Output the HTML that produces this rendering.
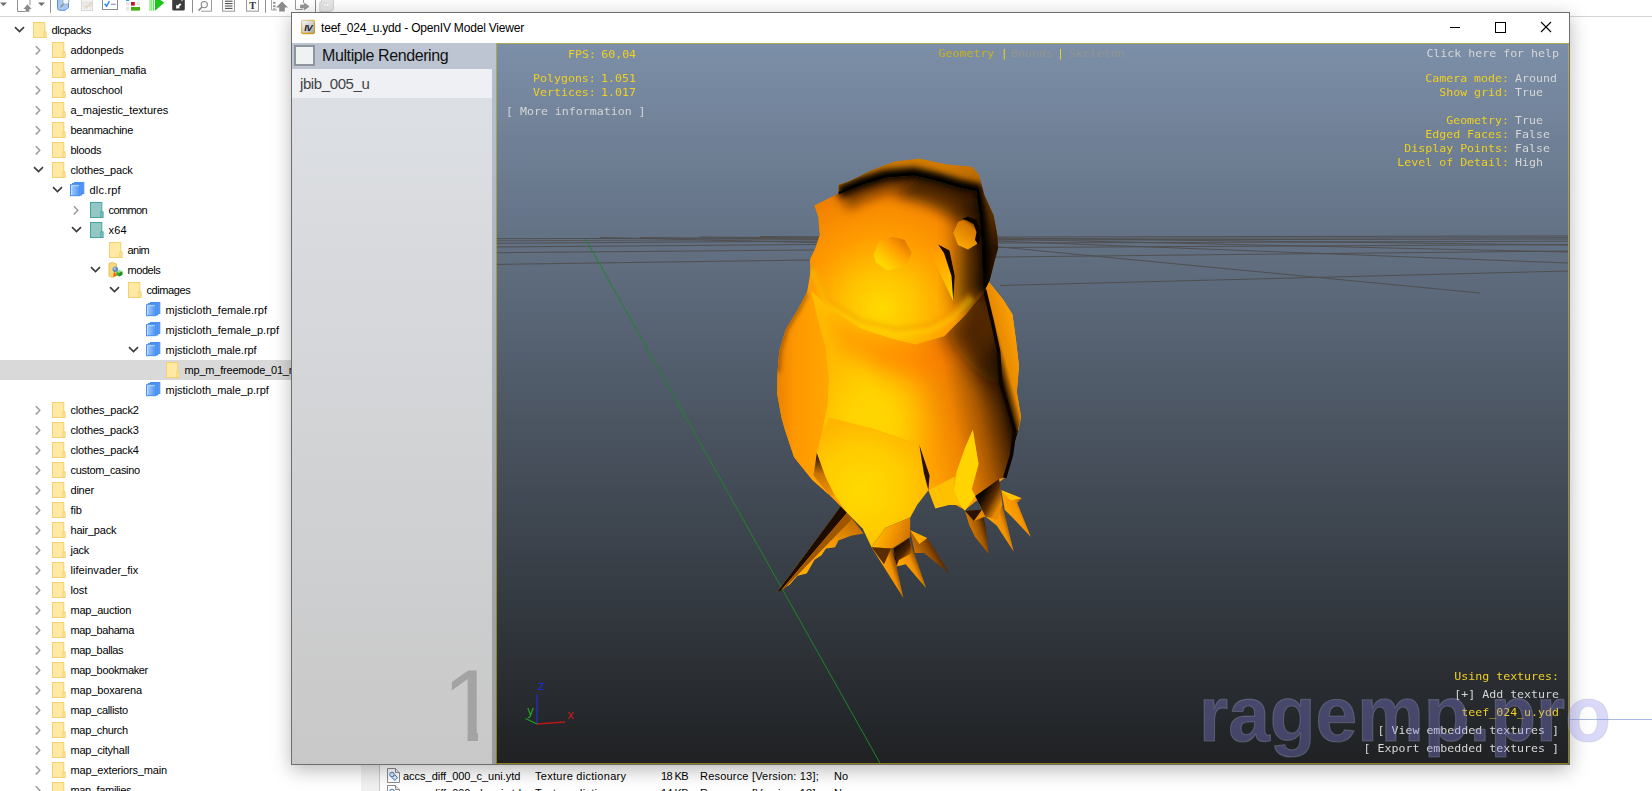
<!DOCTYPE html>
<html><head><meta charset="utf-8"><title>OpenIV</title>
<style>
html,body{margin:0;padding:0;}
body{width:1652px;height:791px;overflow:hidden;background:#fff;position:relative;font-family:"Liberation Sans",sans-serif;}
#tb{position:absolute;left:0;top:0;width:1652px;height:16px;border-bottom:1px solid #d4d4d4;background:#fff;}
#tree{position:absolute;left:0;top:0;width:361px;height:791px;overflow:hidden;}
.row{position:absolute;left:0;width:361px;height:20px;}
.row.sel{background:#d9d9d9;}
.row .ar{position:absolute;top:5px;}
.row .ic{position:absolute;top:2px;}
.row .tx{position:absolute;top:3px;font-size:11px;line-height:14px;color:#000;white-space:nowrap;letter-spacing:-0.25px;}
#split{position:absolute;left:361px;top:17px;width:18px;height:774px;background:#f0f0f0;border-right:1px solid #c8c8c8;}
#list{position:absolute;left:380px;top:764px;width:1272px;height:27px;font-size:11px;color:#000;}
#list span{position:absolute;white-space:nowrap;letter-spacing:-0.02px;}
#win{position:absolute;left:291px;top:12px;width:1277px;height:751px;border:1px solid #6e6e6e;background:#fff;box-shadow:0 5px 18px 0 rgba(0,0,0,0.28);}
#title{position:absolute;left:0;top:0;width:1277px;height:30px;background:#fff;}
#title .t{position:absolute;left:29px;top:7px;font-size:12px;line-height:16px;color:#000;white-space:nowrap;letter-spacing:-0.19px;}
#lp{position:absolute;left:0;top:30px;width:200px;height:721px;background:linear-gradient(#dee1e6,#c8c8c8);}
#lph{position:absolute;left:0;top:0;width:204px;height:26px;background:#bcc5d1;}
#cb{position:absolute;left:2px;top:2px;width:17px;height:17px;border:2px solid #8e959f;background:#f0f1f3;}
#lph .t{position:absolute;left:30px;top:3px;font-size:16px;line-height:20px;color:#111;white-space:nowrap;letter-spacing:-0.4px;}
#li{position:absolute;left:0;top:26px;width:200px;height:29px;background:#eef0f3;}
#li .t{position:absolute;left:8px;top:5px;font-size:15px;line-height:19px;color:#444;white-space:nowrap;letter-spacing:-0.4px;}
#one{position:absolute;left:150px;top:605px;font-size:102px;line-height:116px;color:#a3a3a3;clip-path:polygon(0 0,36px 0,36px 100px,25.5px 100px,25.5px 83.5px,0 83.5px);}
#strip{position:absolute;left:200px;top:56px;width:4px;height:695px;background:linear-gradient(#b6c0ce,#9a9a9a);}
#vp{position:absolute;left:204px;top:30px;width:1071px;height:719px;border:1px solid #a89a30;border-image:linear-gradient(#aea854,#8b7e16) 1;background:linear-gradient(#7c8fa8,#1f2123);overflow:hidden;}
#vp svg.scene{position:absolute;left:0;top:0;}
.m{position:absolute;font-family:"DejaVu Sans Mono","Liberation Mono",monospace;font-size:11.6px;line-height:14px;white-space:pre;color:#d6d6d6;transform:scaleY(0.88);transform-origin:0 11px;}
.y{color:#f0d020;}
.m.r{text-align:right;}
.m.lab{right:59px;}
.m.val{left:1018px;}
.ax{position:absolute;font-family:"DejaVu Sans","Liberation Sans",sans-serif;font-size:12px;line-height:14px;}
.dim{color:#93958c;}
#wm{position:absolute;left:1199px;top:665.5px;font-family:"Liberation Sans",sans-serif;font-weight:bold;font-size:78px;line-height:96px;color:rgba(140,138,240,0.32);-webkit-text-stroke:1.2px rgba(170,175,190,0.28);transform-origin:0 0;transform:scaleX(0.96);white-space:nowrap;}
#bl{position:absolute;left:1570px;top:719px;width:82px;height:1px;background:#a9bbe4;}
</style></head><body>
<svg width="0" height="0" style="position:absolute"><defs>
<linearGradient id="gRpf" x1="0" y1="0" x2="1" y2="0"><stop offset="0" stop-color="#a9d0ff"/><stop offset="1" stop-color="#4a93f4"/></linearGradient>
<g id="i-folder"><rect x="0.5" y="0.5" width="11.3" height="15" fill="#ffe9a3" stroke="#f3d071"/><rect x="10.9" y="9.9" width="2.2" height="5.6" fill="#ffe9a3" stroke="#f3d071"/><rect x="1" y="1" width="9" height="14" fill="#ffe9a3"/></g>
<g id="i-teal"><rect x="0.5" y="0.5" width="11.3" height="15" fill="#94c7c3" stroke="#43a59e"/><rect x="10.9" y="9.9" width="2.2" height="5.6" fill="#94c7c3" stroke="#43a59e"/><rect x="1" y="1" width="9" height="14" fill="#94c7c3"/></g>
<g id="i-rpf"><rect x="4.5" y="0.5" width="9.3" height="11" fill="url(#gRpf)" stroke="#4a8ff0"/><rect x="2.5" y="1.5" width="9.3" height="11.5" fill="url(#gRpf)" stroke="#4a8ff0"/><rect x="0.5" y="2.7" width="9.3" height="11" fill="url(#gRpf)" stroke="#4a8ff0"/><path d="M1.5 13 V3.7 H9" fill="none" stroke="#cfe5ff" stroke-width="0.8"/></g>
<g id="i-models"><path d="M1 1.5 L4.5 0.5 L8.5 2 V13 L4.5 15.5 L1 14Z" fill="#f7d978" stroke="#e2b94a" stroke-width="0.8"/><circle cx="7.3" cy="7.3" r="2.8" fill="#5f8fc4"/><circle cx="6.6" cy="6.5" r="1.2" fill="#a9c7e6"/><path d="M5 15 L6 9.5 L9.5 13.5Z" fill="#f06a10"/><path d="M8.5 9.8 L11.5 8.3 L14.3 9.5 V12.8 L11.3 14.6 L8.5 13Z" fill="#2fae2f"/><path d="M8.5 9.8 L11.5 8.3 L14.3 9.5 L11.3 11Z" fill="#8fe08f"/><path d="M11.3 11 L14.3 9.5 V12.8 L11.3 14.6Z" fill="#1e8a1e"/></g>
<g id="i-file"><path d="M0.5 0.5 H8.5 L12.5 4.5 V14.5 H0.5Z" fill="#fff" stroke="#8a8a8a"/><path d="M8.5 0.5 V4.5 H12.5" fill="#e8e8e8" stroke="#8a8a8a"/><circle cx="5" cy="6.5" r="2.3" fill="#dbe8f7" stroke="#3c6fb0" stroke-width="0.9"/><rect x="5.8" y="7.6" width="4" height="4" transform="rotate(45 7.8 9.6)" fill="#dbe8f7" stroke="#3c6fb0" stroke-width="0.9"/></g>
</defs></svg>
<div id="tb"><svg width="345" height="16" viewBox="0 0 345 16" style="position:absolute;left:0;top:0">
<path d="M0 2.4 H7 L3.5 6Z" fill="#6e6e6e"/>
<path d="M17.5 -1 V11.5 H25.5" fill="none" stroke="#8f8f8f"/><path d="M30 -1 V5" stroke="#8f8f8f"/>
<path d="M27.5 4.2 L31.6 9 H29.4 V11.8 H25.6 V9 H23.4Z" fill="#8a8a8a"/>
<path d="M38 2.4 H45 L41.5 6Z" fill="#6e6e6e"/>
<rect x="50" y="0" width="1" height="12.7" fill="#8e8e8e"/>
<path d="M57.5 -1 V8 Q57.5 10.3 60 10.3 H65 L68.5 7.5 V-1Z" fill="#a9c9f3" stroke="#5a8ede" stroke-width="1"/>
<circle cx="65.8" cy="1.3" r="3.2" fill="#eef5ff" stroke="#9aa6b8" stroke-width="1"/><path d="M63.5 4 L60.5 7.3" stroke="#8a8f9a" stroke-width="1.6"/>
<rect x="81.5" y="-1" width="11" height="11.5" fill="#f3f3f3" stroke="#d8d8d8"/><path d="M84 1 V9 M87 1 V9 M90 1 V9 M82 3 H92 M82 6 H92" stroke="#dcdcdc" stroke-width="0.8"/><path d="M85 8.5 L92.5 2.5" stroke="#e3d3b8" stroke-width="1.6"/>
<rect x="102.5" y="-1" width="15" height="10.5" fill="#fff" stroke="#8c8c8c"/><path d="M104.6 3.8 L106.6 6.2 L109.4 1.2" fill="none" stroke="#2a86e2" stroke-width="1.4"/><path d="M110.8 4.3 H115.8" stroke="#9a8fc0" stroke-width="1.2"/>
<rect x="126" y="-1" width="3.2" height="2" fill="#2a9be6"/><rect x="130.8" y="-1" width="4" height="1" fill="#e8e8e8"/><rect x="136.5" y="-1" width="3.5" height="1" fill="#e8e8e8"/>
<rect x="126" y="2" width="3.4" height="3.6" fill="#e6e6e6"/><rect x="131" y="2" width="3.8" height="3.6" fill="#c8102e"/><rect x="136.5" y="2" width="3.5" height="3.6" fill="#e6e6e6"/>
<rect x="126" y="7" width="3.4" height="3.6" fill="#e6e6e6"/><rect x="131" y="7" width="9" height="3.6" fill="#46ab12"/>
<path d="M150 -1 V10.8 M151.8 -1 V10.8 M153.6 -1 V10.8" stroke="#3fe03f" stroke-width="0.9"/><path d="M155 -4 L164.3 2.8 L155 10.8Z" fill="#1fc51f"/>
<rect x="172.2" y="-2" width="12.6" height="12.6" rx="1.6" fill="#3b3b3b"/><path d="M176 8.6 L176.4 4.6 L177.6 5.6 L180 3.2 L181.4 4.6 L179 7 L180 8.2Z" fill="#fff"/><path d="M179.5 -1 L182 -1 V1.2" fill="none" stroke="#cfcfcf" stroke-width="1.2"/>
<rect x="192" y="0" width="1" height="12.7" fill="#8e8e8e"/>
<path d="M211.5 -1 V11.2 H201" fill="none" stroke="#9a9a9a"/><circle cx="204.3" cy="4.6" r="3.1" fill="#f6f6f6" stroke="#8a8a8a" stroke-width="1.1"/><path d="M202 7 L198.6 10.6" stroke="#8a8a8a" stroke-width="1.6"/>
<rect x="222.5" y="-2" width="12" height="13.2" fill="#fbfbfb" stroke="#9a9a9a"/><path d="M225 1.2 H232.5 M225 3.6 H232.5 M225 6 H232.5 M225 8.4 H232.5" stroke="#444" stroke-width="1"/>
<rect x="246.5" y="-2" width="12" height="13.2" fill="#fbfbfb" stroke="#9a9a9a"/>
<text x="252.5" y="9" text-anchor="middle" font-family="Liberation Serif,serif" font-weight="bold" font-size="10" fill="#333">T</text>
<rect x="265" y="0" width="1" height="12.7" fill="#8e8e8e"/>
<path d="M271.5 -1 V10 H277" fill="none" stroke="#a8a8a8"/><rect x="273" y="1.8" width="2.6" height="2" fill="#9a9a9a"/><rect x="273" y="5.2" width="2.6" height="2" fill="#9a9a9a"/><rect x="273" y="8.4" width="2.6" height="1.4" fill="#9a9a9a"/>
<path d="M282 1.6 L288 7.4 H284.8 V11.4 H279.2 V7.4 H276Z" fill="#8d8d8d"/>
<path d="M295.5 -1 V9.5 H303" fill="none" stroke="#9a9a9a"/><path d="M303.5 -1 V3" stroke="#9a9a9a"/>
<path d="M300.5 5 H304.5 V3.2 L309 6.4 L304.5 9.8 V8 H300.5Z" fill="#9a9a9a" stroke="#7d7d7d" stroke-width="0.6"/>
<rect x="315" y="0" width="1" height="13" fill="#8a8a8a"/>
<path d="M321.5 -1 V2.5 H319.8 V11.5 H330.5 Q333.5 11 333.5 8 V-1" fill="#e6e6e6" stroke="#cfcfcf"/><path d="M323 4 H327 V2.6 L330 5 L327 7.4 V6 H323Z" fill="#fbfbfb" stroke="#d6d6d6" stroke-width="0.6"/>
</svg>
</div>
<div id="tree">
<div class="row" style="top:20px"><svg class="ar" style="left:14.0px" width="11" height="10" viewBox="0 0 11 10"><path d="M1 2.1 L5.5 6.6 L10 2.1" fill="none" stroke="#3c3c3c" stroke-width="1.6"/></svg><svg class="ic" style="left:33.0px" width="14" height="16" viewBox="0 0 14 16"><use href="#i-folder"/></svg><span class="tx" style="left:51.5px;letter-spacing:-0.41px">dlcpacks</span></div>
<div class="row" style="top:40px"><svg class="ar" style="left:33.0px" width="10" height="10" viewBox="0 0 10 10"><path d="M2.8 1.2 L6.8 5.3 L2.8 9.4" fill="none" stroke="#9b9b9b" stroke-width="1.5"/></svg><svg class="ic" style="left:52.0px" width="14" height="16" viewBox="0 0 14 16"><use href="#i-folder"/></svg><span class="tx" style="left:70.5px;letter-spacing:-0.16px">addonpeds</span></div>
<div class="row" style="top:60px"><svg class="ar" style="left:33.0px" width="10" height="10" viewBox="0 0 10 10"><path d="M2.8 1.2 L6.8 5.3 L2.8 9.4" fill="none" stroke="#9b9b9b" stroke-width="1.5"/></svg><svg class="ic" style="left:52.0px" width="14" height="16" viewBox="0 0 14 16"><use href="#i-folder"/></svg><span class="tx" style="left:70.5px;letter-spacing:-0.23px">armenian_mafia</span></div>
<div class="row" style="top:80px"><svg class="ar" style="left:33.0px" width="10" height="10" viewBox="0 0 10 10"><path d="M2.8 1.2 L6.8 5.3 L2.8 9.4" fill="none" stroke="#9b9b9b" stroke-width="1.5"/></svg><svg class="ic" style="left:52.0px" width="14" height="16" viewBox="0 0 14 16"><use href="#i-folder"/></svg><span class="tx" style="left:70.5px;letter-spacing:-0.14px">autoschool</span></div>
<div class="row" style="top:100px"><svg class="ar" style="left:33.0px" width="10" height="10" viewBox="0 0 10 10"><path d="M2.8 1.2 L6.8 5.3 L2.8 9.4" fill="none" stroke="#9b9b9b" stroke-width="1.5"/></svg><svg class="ic" style="left:52.0px" width="14" height="16" viewBox="0 0 14 16"><use href="#i-folder"/></svg><span class="tx" style="left:70.5px;letter-spacing:0.0px">a_majestic_textures</span></div>
<div class="row" style="top:120px"><svg class="ar" style="left:33.0px" width="10" height="10" viewBox="0 0 10 10"><path d="M2.8 1.2 L6.8 5.3 L2.8 9.4" fill="none" stroke="#9b9b9b" stroke-width="1.5"/></svg><svg class="ic" style="left:52.0px" width="14" height="16" viewBox="0 0 14 16"><use href="#i-folder"/></svg><span class="tx" style="left:70.5px;letter-spacing:-0.33px">beanmachine</span></div>
<div class="row" style="top:140px"><svg class="ar" style="left:33.0px" width="10" height="10" viewBox="0 0 10 10"><path d="M2.8 1.2 L6.8 5.3 L2.8 9.4" fill="none" stroke="#9b9b9b" stroke-width="1.5"/></svg><svg class="ic" style="left:52.0px" width="14" height="16" viewBox="0 0 14 16"><use href="#i-folder"/></svg><span class="tx" style="left:70.5px;letter-spacing:-0.27px">bloods</span></div>
<div class="row" style="top:160px"><svg class="ar" style="left:33.0px" width="11" height="10" viewBox="0 0 11 10"><path d="M1 2.1 L5.5 6.6 L10 2.1" fill="none" stroke="#3c3c3c" stroke-width="1.6"/></svg><svg class="ic" style="left:52.0px" width="14" height="16" viewBox="0 0 14 16"><use href="#i-folder"/></svg><span class="tx" style="left:70.5px;letter-spacing:-0.17px">clothes_pack</span></div>
<div class="row" style="top:180px"><svg class="ar" style="left:52.0px" width="11" height="10" viewBox="0 0 11 10"><path d="M1 2.1 L5.5 6.6 L10 2.1" fill="none" stroke="#3c3c3c" stroke-width="1.6"/></svg><svg class="ic" style="left:70.0px" width="16" height="16" viewBox="0 0 16 16"><use href="#i-rpf"/></svg><span class="tx" style="left:89.5px;letter-spacing:0.19px">dlc.rpf</span></div>
<div class="row" style="top:200px"><svg class="ar" style="left:71.0px" width="10" height="10" viewBox="0 0 10 10"><path d="M2.8 1.2 L6.8 5.3 L2.8 9.4" fill="none" stroke="#9b9b9b" stroke-width="1.5"/></svg><svg class="ic" style="left:90.0px" width="14" height="16" viewBox="0 0 14 16"><use href="#i-teal"/></svg><span class="tx" style="left:108.5px;letter-spacing:-0.6px">common</span></div>
<div class="row" style="top:220px"><svg class="ar" style="left:71.0px" width="11" height="10" viewBox="0 0 11 10"><path d="M1 2.1 L5.5 6.6 L10 2.1" fill="none" stroke="#3c3c3c" stroke-width="1.6"/></svg><svg class="ic" style="left:90.0px" width="14" height="16" viewBox="0 0 14 16"><use href="#i-teal"/></svg><span class="tx" style="left:108.5px;letter-spacing:0.18px">x64</span></div>
<div class="row" style="top:240px"><svg class="ic" style="left:109.0px" width="14" height="16" viewBox="0 0 14 16"><use href="#i-folder"/></svg><span class="tx" style="left:127.5px;letter-spacing:-0.55px">anim</span></div>
<div class="row" style="top:260px"><svg class="ar" style="left:90.0px" width="11" height="10" viewBox="0 0 11 10"><path d="M1 2.1 L5.5 6.6 L10 2.1" fill="none" stroke="#3c3c3c" stroke-width="1.6"/></svg><svg class="ic" style="left:108.0px" width="16" height="16" viewBox="0 0 16 16"><use href="#i-models"/></svg><span class="tx" style="left:127.5px;letter-spacing:-0.45px">models</span></div>
<div class="row" style="top:280px"><svg class="ar" style="left:109.0px" width="11" height="10" viewBox="0 0 11 10"><path d="M1 2.1 L5.5 6.6 L10 2.1" fill="none" stroke="#3c3c3c" stroke-width="1.6"/></svg><svg class="ic" style="left:128.0px" width="14" height="16" viewBox="0 0 14 16"><use href="#i-folder"/></svg><span class="tx" style="left:146.5px;letter-spacing:-0.41px">cdimages</span></div>
<div class="row" style="top:300px"><svg class="ic" style="left:146.0px" width="16" height="16" viewBox="0 0 16 16"><use href="#i-rpf"/></svg><span class="tx" style="left:165.5px;letter-spacing:0.03px">mjsticloth_female.rpf</span></div>
<div class="row" style="top:320px"><svg class="ic" style="left:146.0px" width="16" height="16" viewBox="0 0 16 16"><use href="#i-rpf"/></svg><span class="tx" style="left:165.5px;letter-spacing:0.02px">mjsticloth_female_p.rpf</span></div>
<div class="row" style="top:340px"><svg class="ar" style="left:128.0px" width="11" height="10" viewBox="0 0 11 10"><path d="M1 2.1 L5.5 6.6 L10 2.1" fill="none" stroke="#3c3c3c" stroke-width="1.6"/></svg><svg class="ic" style="left:146.0px" width="16" height="16" viewBox="0 0 16 16"><use href="#i-rpf"/></svg><span class="tx" style="left:165.5px;letter-spacing:-0.03px">mjsticloth_male.rpf</span></div>
<div class="row sel" style="top:360px"><svg class="ic" style="left:166.0px" width="14" height="16" viewBox="0 0 14 16"><use href="#i-folder"/></svg><span class="tx" style="left:184.5px;letter-spacing:-0.2px">mp_m_freemode_01_mp_m_clothes_01</span></div>
<div class="row" style="top:380px"><svg class="ic" style="left:146.0px" width="16" height="16" viewBox="0 0 16 16"><use href="#i-rpf"/></svg><span class="tx" style="left:165.5px;letter-spacing:-0.03px">mjsticloth_male_p.rpf</span></div>
<div class="row" style="top:400px"><svg class="ar" style="left:33.0px" width="10" height="10" viewBox="0 0 10 10"><path d="M2.8 1.2 L6.8 5.3 L2.8 9.4" fill="none" stroke="#9b9b9b" stroke-width="1.5"/></svg><svg class="ic" style="left:52.0px" width="14" height="16" viewBox="0 0 14 16"><use href="#i-folder"/></svg><span class="tx" style="left:70.5px;letter-spacing:-0.16px">clothes_pack2</span></div>
<div class="row" style="top:420px"><svg class="ar" style="left:33.0px" width="10" height="10" viewBox="0 0 10 10"><path d="M2.8 1.2 L6.8 5.3 L2.8 9.4" fill="none" stroke="#9b9b9b" stroke-width="1.5"/></svg><svg class="ic" style="left:52.0px" width="14" height="16" viewBox="0 0 14 16"><use href="#i-folder"/></svg><span class="tx" style="left:70.5px;letter-spacing:-0.17px">clothes_pack3</span></div>
<div class="row" style="top:440px"><svg class="ar" style="left:33.0px" width="10" height="10" viewBox="0 0 10 10"><path d="M2.8 1.2 L6.8 5.3 L2.8 9.4" fill="none" stroke="#9b9b9b" stroke-width="1.5"/></svg><svg class="ic" style="left:52.0px" width="14" height="16" viewBox="0 0 14 16"><use href="#i-folder"/></svg><span class="tx" style="left:70.5px;letter-spacing:-0.16px">clothes_pack4</span></div>
<div class="row" style="top:460px"><svg class="ar" style="left:33.0px" width="10" height="10" viewBox="0 0 10 10"><path d="M2.8 1.2 L6.8 5.3 L2.8 9.4" fill="none" stroke="#9b9b9b" stroke-width="1.5"/></svg><svg class="ic" style="left:52.0px" width="14" height="16" viewBox="0 0 14 16"><use href="#i-folder"/></svg><span class="tx" style="left:70.5px;letter-spacing:-0.31px">custom_casino</span></div>
<div class="row" style="top:480px"><svg class="ar" style="left:33.0px" width="10" height="10" viewBox="0 0 10 10"><path d="M2.8 1.2 L6.8 5.3 L2.8 9.4" fill="none" stroke="#9b9b9b" stroke-width="1.5"/></svg><svg class="ic" style="left:52.0px" width="14" height="16" viewBox="0 0 14 16"><use href="#i-folder"/></svg><span class="tx" style="left:70.5px;letter-spacing:-0.23px">diner</span></div>
<div class="row" style="top:500px"><svg class="ar" style="left:33.0px" width="10" height="10" viewBox="0 0 10 10"><path d="M2.8 1.2 L6.8 5.3 L2.8 9.4" fill="none" stroke="#9b9b9b" stroke-width="1.5"/></svg><svg class="ic" style="left:52.0px" width="14" height="16" viewBox="0 0 14 16"><use href="#i-folder"/></svg><span class="tx" style="left:70.5px;letter-spacing:-0.08px">fib</span></div>
<div class="row" style="top:520px"><svg class="ar" style="left:33.0px" width="10" height="10" viewBox="0 0 10 10"><path d="M2.8 1.2 L6.8 5.3 L2.8 9.4" fill="none" stroke="#9b9b9b" stroke-width="1.5"/></svg><svg class="ic" style="left:52.0px" width="14" height="16" viewBox="0 0 14 16"><use href="#i-folder"/></svg><span class="tx" style="left:70.5px;letter-spacing:-0.22px">hair_pack</span></div>
<div class="row" style="top:540px"><svg class="ar" style="left:33.0px" width="10" height="10" viewBox="0 0 10 10"><path d="M2.8 1.2 L6.8 5.3 L2.8 9.4" fill="none" stroke="#9b9b9b" stroke-width="1.5"/></svg><svg class="ic" style="left:52.0px" width="14" height="16" viewBox="0 0 14 16"><use href="#i-folder"/></svg><span class="tx" style="left:70.5px;letter-spacing:-0.27px">jack</span></div>
<div class="row" style="top:560px"><svg class="ar" style="left:33.0px" width="10" height="10" viewBox="0 0 10 10"><path d="M2.8 1.2 L6.8 5.3 L2.8 9.4" fill="none" stroke="#9b9b9b" stroke-width="1.5"/></svg><svg class="ic" style="left:52.0px" width="14" height="16" viewBox="0 0 14 16"><use href="#i-folder"/></svg><span class="tx" style="left:70.5px;letter-spacing:0.04px">lifeinvader_fix</span></div>
<div class="row" style="top:580px"><svg class="ar" style="left:33.0px" width="10" height="10" viewBox="0 0 10 10"><path d="M2.8 1.2 L6.8 5.3 L2.8 9.4" fill="none" stroke="#9b9b9b" stroke-width="1.5"/></svg><svg class="ic" style="left:52.0px" width="14" height="16" viewBox="0 0 14 16"><use href="#i-folder"/></svg><span class="tx" style="left:70.5px;letter-spacing:-0.1px">lost</span></div>
<div class="row" style="top:600px"><svg class="ar" style="left:33.0px" width="10" height="10" viewBox="0 0 10 10"><path d="M2.8 1.2 L6.8 5.3 L2.8 9.4" fill="none" stroke="#9b9b9b" stroke-width="1.5"/></svg><svg class="ic" style="left:52.0px" width="14" height="16" viewBox="0 0 14 16"><use href="#i-folder"/></svg><span class="tx" style="left:70.5px;letter-spacing:-0.22px">map_auction</span></div>
<div class="row" style="top:620px"><svg class="ar" style="left:33.0px" width="10" height="10" viewBox="0 0 10 10"><path d="M2.8 1.2 L6.8 5.3 L2.8 9.4" fill="none" stroke="#9b9b9b" stroke-width="1.5"/></svg><svg class="ic" style="left:52.0px" width="14" height="16" viewBox="0 0 14 16"><use href="#i-folder"/></svg><span class="tx" style="left:70.5px;letter-spacing:-0.39px">map_bahama</span></div>
<div class="row" style="top:640px"><svg class="ar" style="left:33.0px" width="10" height="10" viewBox="0 0 10 10"><path d="M2.8 1.2 L6.8 5.3 L2.8 9.4" fill="none" stroke="#9b9b9b" stroke-width="1.5"/></svg><svg class="ic" style="left:52.0px" width="14" height="16" viewBox="0 0 14 16"><use href="#i-folder"/></svg><span class="tx" style="left:70.5px;letter-spacing:-0.35px">map_ballas</span></div>
<div class="row" style="top:660px"><svg class="ar" style="left:33.0px" width="10" height="10" viewBox="0 0 10 10"><path d="M2.8 1.2 L6.8 5.3 L2.8 9.4" fill="none" stroke="#9b9b9b" stroke-width="1.5"/></svg><svg class="ic" style="left:52.0px" width="14" height="16" viewBox="0 0 14 16"><use href="#i-folder"/></svg><span class="tx" style="left:70.5px;letter-spacing:-0.35px">map_bookmaker</span></div>
<div class="row" style="top:680px"><svg class="ar" style="left:33.0px" width="10" height="10" viewBox="0 0 10 10"><path d="M2.8 1.2 L6.8 5.3 L2.8 9.4" fill="none" stroke="#9b9b9b" stroke-width="1.5"/></svg><svg class="ic" style="left:52.0px" width="14" height="16" viewBox="0 0 14 16"><use href="#i-folder"/></svg><span class="tx" style="left:70.5px;letter-spacing:-0.17px">map_boxarena</span></div>
<div class="row" style="top:700px"><svg class="ar" style="left:33.0px" width="10" height="10" viewBox="0 0 10 10"><path d="M2.8 1.2 L6.8 5.3 L2.8 9.4" fill="none" stroke="#9b9b9b" stroke-width="1.5"/></svg><svg class="ic" style="left:52.0px" width="14" height="16" viewBox="0 0 14 16"><use href="#i-folder"/></svg><span class="tx" style="left:70.5px;letter-spacing:-0.32px">map_callisto</span></div>
<div class="row" style="top:720px"><svg class="ar" style="left:33.0px" width="10" height="10" viewBox="0 0 10 10"><path d="M2.8 1.2 L6.8 5.3 L2.8 9.4" fill="none" stroke="#9b9b9b" stroke-width="1.5"/></svg><svg class="ic" style="left:52.0px" width="14" height="16" viewBox="0 0 14 16"><use href="#i-folder"/></svg><span class="tx" style="left:70.5px;letter-spacing:-0.32px">map_church</span></div>
<div class="row" style="top:740px"><svg class="ar" style="left:33.0px" width="10" height="10" viewBox="0 0 10 10"><path d="M2.8 1.2 L6.8 5.3 L2.8 9.4" fill="none" stroke="#9b9b9b" stroke-width="1.5"/></svg><svg class="ic" style="left:52.0px" width="14" height="16" viewBox="0 0 14 16"><use href="#i-folder"/></svg><span class="tx" style="left:70.5px;letter-spacing:-0.21px">map_cityhall</span></div>
<div class="row" style="top:760px"><svg class="ar" style="left:33.0px" width="10" height="10" viewBox="0 0 10 10"><path d="M2.8 1.2 L6.8 5.3 L2.8 9.4" fill="none" stroke="#9b9b9b" stroke-width="1.5"/></svg><svg class="ic" style="left:52.0px" width="14" height="16" viewBox="0 0 14 16"><use href="#i-folder"/></svg><span class="tx" style="left:70.5px;letter-spacing:-0.18px">map_exteriors_main</span></div>
<div class="row" style="top:780px"><svg class="ar" style="left:33.0px" width="10" height="10" viewBox="0 0 10 10"><path d="M2.8 1.2 L6.8 5.3 L2.8 9.4" fill="none" stroke="#9b9b9b" stroke-width="1.5"/></svg><svg class="ic" style="left:52.0px" width="14" height="16" viewBox="0 0 14 16"><use href="#i-folder"/></svg><span class="tx" style="left:70.5px;letter-spacing:-0.35px">map_families</span></div>
</div>
<div id="split"></div>
<div id="list">
<svg width="14" height="16" viewBox="0 0 14 16" style="position:absolute;left:7px;top:4px"><use href="#i-file"/></svg><svg width="14" height="16" viewBox="0 0 14 16" style="position:absolute;left:7px;top:21px"><use href="#i-file"/></svg><span style="left:23px;top:6px">accs_diff_000_c_uni.ytd</span>
<span style="left:155px;top:6px;letter-spacing:0.28px">Texture dictionary</span>
<span style="left:281px;top:6px;letter-spacing:-0.6px">18 KB</span>
<span style="left:320px;top:6px;letter-spacing:0.2px">Resource [Version: 13];</span>
<span style="left:454px;top:6px">No</span>
<span style="left:23px;top:23px">accs_diff_000_d_uni.ytd</span>
<span style="left:155px;top:23px;letter-spacing:0.28px">Texture dictionary</span>
<span style="left:281px;top:23px;letter-spacing:-0.6px">14 KB</span>
<span style="left:320px;top:23px;letter-spacing:0.2px">Resource [Version: 13];</span>
<span style="left:454px;top:23px">No</span>
</div>
<div id="bl"></div>
<div id="win">
 <div id="title"><svg width="16" height="16" viewBox="0 0 16 16" style="position:absolute;left:8px;top:6px"><defs><linearGradient id="gIV" x1="0" y1="0" x2="1" y2="1"><stop offset="0" stop-color="#f4f4f4"/><stop offset="0.5" stop-color="#d2d2d2"/><stop offset="1" stop-color="#a8a8a8"/></linearGradient><linearGradient id="gIVb" x1="0" y1="0" x2="1" y2="1"><stop offset="0" stop-color="#d8d0b8"/><stop offset="0.5" stop-color="#e0a820"/><stop offset="1" stop-color="#c89018"/></linearGradient></defs><rect x="1" y="0.8" width="14" height="14.4" rx="2" fill="url(#gIVb)"/><rect x="2.2" y="1.8" width="11.6" height="12" rx="1.2" fill="url(#gIV)"/><text x="8" y="12" text-anchor="middle" font-family="Liberation Sans,sans-serif" font-weight="bold" font-style="italic" font-size="9.5" letter-spacing="-0.8" fill="#1c1c1c">IV</text></svg><span class="t">teef_024_u.ydd - OpenIV Model Viewer</span>
 <svg width="110" height="30" viewBox="1150 0 110 30" style="position:absolute;left:1150px;top:0"><path d="M1158 14.5 H1168" stroke="#000" stroke-width="1"/><rect x="1203.5" y="9.5" width="10" height="10" fill="none" stroke="#000" stroke-width="1"/><path d="M1249 9 L1259 19 M1259 9 L1249 19" stroke="#000" stroke-width="1.1"/></svg></div>
 <div id="lp">
  <div id="lph"><div id="cb"></div><span class="t">Multiple Rendering</span></div>
  <div id="li"><span class="t">jbib_005_u</span></div>
  <div id="one">1</div>
 </div>
 <div id="strip"></div>
 <div id="vp">
  <svg class="scene" width="1071" height="719" viewBox="497 44 1071 719"><defs>
 <filter id="b2" x="-20%" y="-20%" width="140%" height="140%"><feGaussianBlur stdDeviation="2"/></filter>
 <filter id="b3" x="-20%" y="-20%" width="140%" height="140%"><feGaussianBlur stdDeviation="3"/></filter>
 <filter id="b6" x="-30%" y="-30%" width="160%" height="160%"><feGaussianBlur stdDeviation="6"/></filter>
 <filter id="b10" x="-40%" y="-40%" width="180%" height="180%"><feGaussianBlur stdDeviation="10"/></filter>
 <filter id="b16" x="-50%" y="-50%" width="200%" height="200%"><feGaussianBlur stdDeviation="16"/></filter>
 <clipPath id="cChest"><path id="pChest" d="M811.6 292.9 L818 320.8 825.5 346.6 828.8 376.7 827.7 404.6 822.3 430.4 871.8 428.3 919.3 444.8 928.4 490.3 954.6 476.7 964.9 448.2 972.8 430 1018.4 430 1014.7 430.4 1007.2 404.6 1000.7 383.2 998.6 350.9 992.1 320.8 984.6 289.7 985 262 812 262Z"/></clipPath>
 <clipPath id="cWingL"><path d="M807.3 291.8 L797.6 310 785.8 329.4 779.3 350.9 777.6 372.4 777.2 393.9 781.5 417.5 785 430 794.1 457.3 812.4 480.1 829.4 494.9 813.5 475.5 816.9 452.8 822.3 430.4 827.7 404.6 828.8 376.7 825.5 346.6 818 320.8 811.6 292.9 812 270Z"/></clipPath>
 <clipPath id="cHead"><path id="pHead" d="M814.4 205.4 L838.7 193.2 838.7 184.9 850 181.1 872.8 169.7 895.6 161.4 919.9 158.8 945.7 164.4 972.2 167 979 175 984.4 195.5 993.5 215.3 997.3 235 998 248.6 994.2 262.3 989.7 280 983.6 292.2 965.4 315 944.2 336.2 915.3 344.6 891 338.5 860.7 328.6 827.3 305.9 811.4 290.7 809.9 259.6 815.2 248.6 819.7 235 818.2 216.8Z"/></clipPath>
 <clipPath id="cHood"><path d="M838.7 184.9 L850 181.1 872.8 169.7 895.6 161.4 919.9 158.8 945.7 164.4 972.2 167 979 175 984.4 195.5 993.5 215.3 997.3 235 998 248.6 994.2 262.3 989.7 280 983.6 292.2 983 270 982 240 980 215 976.5 191.4 959.3 187.6 936.6 180.8 913.8 175.5 885 177.8 860.7 185.3 838.7 194.4Z"/></clipPath>
 <clipPath id="cFace"><path d="M814.4 205.4 L838.7 193.2 860.7 184.1 885 176.6 913.8 174.3 936.6 179.6 959.3 186.4 977.5 190.2 981 215 983 240 984 270 983.6 292.2 965.4 315 944.2 336.2 915.3 344.6 891 338.5 860.7 328.6 827.3 305.9 811.4 290.7 809.9 259.6 815.2 248.6 819.7 235 818.2 216.8Z"/></clipPath>
 <linearGradient id="gHoodRim" gradientUnits="userSpaceOnUse" x1="955" y1="160" x2="1000" y2="245"><stop offset="0" stop-color="#cf7a00"/><stop offset="0.3" stop-color="#b86800"/><stop offset="0.6" stop-color="#6a3600"/><stop offset="1" stop-color="#2a1400"/></linearGradient>
 <linearGradient id="c1" gradientUnits="userSpaceOnUse" x1="884" y1="575" x2="900" y2="570"><stop offset="0" stop-color="#ffa600"/><stop offset="0.55" stop-color="#f09000"/><stop offset="1" stop-color="#6a3200"/></linearGradient><linearGradient id="c2" gradientUnits="userSpaceOnUse" x1="903" y1="570" x2="921" y2="562"><stop offset="0" stop-color="#ffa600"/><stop offset="0.55" stop-color="#f09000"/><stop offset="1" stop-color="#6a3200"/></linearGradient><linearGradient id="c3" gradientUnits="userSpaceOnUse" x1="918" y1="556" x2="936" y2="546"><stop offset="0" stop-color="#c87000"/><stop offset="0.5" stop-color="#9a5200"/><stop offset="1" stop-color="#4a2200"/></linearGradient><linearGradient id="cA" gradientUnits="userSpaceOnUse" x1="971" y1="535" x2="990" y2="529"><stop offset="0" stop-color="#d87c00"/><stop offset="0.5" stop-color="#a05600"/><stop offset="1" stop-color="#1a0a00"/></linearGradient><linearGradient id="cB" gradientUnits="userSpaceOnUse" x1="990" y1="525" x2="1011" y2="518"><stop offset="0" stop-color="#ffa600"/><stop offset="0.55" stop-color="#f09000"/><stop offset="1" stop-color="#6a3200"/></linearGradient><linearGradient id="cC" gradientUnits="userSpaceOnUse" x1="1008" y1="520" x2="1027" y2="512"><stop offset="0" stop-color="#ffa800"/><stop offset="0.6" stop-color="#f59400"/><stop offset="1" stop-color="#a85c00"/></linearGradient><linearGradient id="cBt" gradientUnits="userSpaceOnUse" x1="985" y1="490" x2="1003" y2="500"><stop offset="0" stop-color="#0c0400"/><stop offset="0.5" stop-color="#5a2c00"/><stop offset="1" stop-color="#e88a00"/></linearGradient><linearGradient id="c2t" gradientUnits="userSpaceOnUse" x1="897" y1="545" x2="910" y2="556"><stop offset="0" stop-color="#1a0a00"/><stop offset="0.6" stop-color="#4a2400"/><stop offset="1" stop-color="#c06c00"/></linearGradient><linearGradient id="gAnk" gradientUnits="userSpaceOnUse" x1="880" y1="530" x2="910" y2="540"><stop offset="0" stop-color="#ffb400"/><stop offset="0.5" stop-color="#f09000"/><stop offset="1" stop-color="#c87000"/></linearGradient>
 <radialGradient id="gHead" gradientUnits="userSpaceOnUse" cx="882" cy="308" r="120"><stop offset="0" stop-color="#ffda00"/><stop offset="0.28" stop-color="#ffc400"/><stop offset="0.6" stop-color="#ff9c00"/><stop offset="0.85" stop-color="#f88a00"/><stop offset="1" stop-color="#ee8000"/></radialGradient>
 <linearGradient id="gChest" gradientUnits="userSpaceOnUse" x1="825" y1="400" x2="1005" y2="361"><stop offset="0" stop-color="#ffb800"/><stop offset="0.25" stop-color="#ffc800"/><stop offset="0.5" stop-color="#ffa000"/><stop offset="0.66" stop-color="#f08400"/><stop offset="0.8" stop-color="#a85800"/><stop offset="0.92" stop-color="#4a2400"/><stop offset="0.975" stop-color="#0c0400"/><stop offset="1" stop-color="#0c0400"/></linearGradient>
 <linearGradient id="gWingL" gradientUnits="userSpaceOnUse" x1="777" y1="0" x2="828" y2="0"><stop offset="0" stop-color="#ea8200"/><stop offset="0.35" stop-color="#ff9800"/><stop offset="1" stop-color="#ffa600"/></linearGradient>
 <radialGradient id="gThigh" gradientUnits="userSpaceOnUse" cx="862" cy="490" r="70"><stop offset="0" stop-color="#ffda00"/><stop offset="0.6" stop-color="#ffcc00"/><stop offset="1" stop-color="#ffb600"/></radialGradient>
 <linearGradient id="gGap" gradientUnits="userSpaceOnUse" x1="0" y1="453" x2="0" y2="495"><stop offset="0" stop-color="#140800"/><stop offset="0.5" stop-color="#c87400"/><stop offset="1" stop-color="#f09000"/></linearGradient>
 <linearGradient id="gEyeL" gradientUnits="userSpaceOnUse" x1="906" y1="240" x2="882" y2="268"><stop offset="0" stop-color="#dd7200"/><stop offset="0.35" stop-color="#ff9c00"/><stop offset="0.7" stop-color="#ffc400"/><stop offset="1" stop-color="#ffdc00"/></linearGradient>
 <linearGradient id="gEyeR" gradientUnits="userSpaceOnUse" x1="978" y1="220" x2="958" y2="248"><stop offset="0" stop-color="#1a0a00"/><stop offset="0.3" stop-color="#d87800"/><stop offset="1" stop-color="#ffae00"/></linearGradient>
 <linearGradient id="gBeak" gradientUnits="userSpaceOnUse" x1="938" y1="246" x2="952" y2="298"><stop offset="0" stop-color="#ff9600"/><stop offset="1" stop-color="#ffd000"/></linearGradient>
 <linearGradient id="gTail" gradientUnits="userSpaceOnUse" x1="845" y1="510" x2="780" y2="590"><stop offset="0" stop-color="#c06a00"/><stop offset="0.4" stop-color="#ffa400"/><stop offset="1" stop-color="#ffb000"/></linearGradient>
 <linearGradient id="gWingR" gradientUnits="userSpaceOnUse" x1="988" y1="330" x2="1018" y2="322"><stop offset="0" stop-color="#100600"/><stop offset="0.3" stop-color="#e88a00"/><stop offset="1" stop-color="#ffa400"/></linearGradient>
 <linearGradient id="gRD" gradientUnits="userSpaceOnUse" x1="972" y1="0" x2="1016" y2="0"><stop offset="0" stop-color="#f08c00"/><stop offset="0.5" stop-color="#9a5200"/><stop offset="1" stop-color="#100600"/></linearGradient>
 <linearGradient id="gClaw" gradientUnits="userSpaceOnUse" x1="0" y1="0" x2="1" y2="0" gradientTransform="translate(880 0) scale(40 1)"><stop offset="0" stop-color="#ffa000"/><stop offset="1" stop-color="#7a3c00"/></linearGradient>
</defs>
<!-- grid -->
<g stroke="#4e4946" stroke-width="1" fill="none" opacity="0.85">
<path d="M497 238.7 L810 238 L1000 237 L1568 236"/>
<path d="M497 240.8 L810 239.6 L1000 238.6 L1568 237.6" opacity="0.8"/>
<path d="M497 243.3 L810 241.2 L1000 240 L1568 239"/>
<path d="M497 247 L810 244.5 L1000 243 L1568 241.2"/>
<path d="M497 252.7 L810 250 L1000 247.5 L1568 244.6"/>
<path d="M497 264.4 L810 260 L1000 257 L1568 251"/>
<path d="M1000 285.5 L1568 271"/>
<path d="M760 236.5 L1000 238 L1568 245"/>
<path d="M700 237 L1000 239.2 L1568 252"/>
<path d="M640 237.5 L1000 241.2 L1568 263"/>
<path d="M600 237.5 L1000 247 L1480 293"/>
</g>
<path d="M585.6 239 L880 763" stroke="#1d8527" stroke-width="1" fill="none"/>
<!-- gizmo -->
<path d="M537 724 V694.5" stroke="#2030d0" stroke-width="1.2"/>
<path d="M537 724 L565 722" stroke="#b81818" stroke-width="1.3"/>
<path d="M537 724 L525.5 718.5" stroke="#20a020" stroke-width="1.2"/>
<!-- tail -->
<path d="M840.8 506.3 L847.6 513.1 863.6 533.6 851 535.8 838.5 540.4 835.1 547.2 826 548.4 821.5 555.2 814.6 559.8 806.7 573.4 797.6 575.7 789.6 584.8 777.1 592.1Z" fill="url(#gTail)"/>
<path d="M840.8 506.3 L847.2 512.6 781 590.5 777.1 592.1Z" fill="#1c0c00"/><path d="M847.2 512.6 L852 519 784 589 781 590.5Z" fill="#a05600"/>
<path d="M807.3 291.8 L797.6 310 785.8 329.4 779.3 350.9 777.6 372.4 777.2 393.9 781.5 417.5 785 430 794.1 457.3 812.4 480.1 829.4 494.9 862 528 928 490 965 510 1004.7 477.8 1018.4 430 1021.1 417.5 1016.8 391.8 1019 366 1015.7 338 1012.5 314.4 1002.9 299.3 988.9 282.1 985 262 812 262Z" fill="#ff9e00"/>
<!-- left wing -->
<path d="M807.3 291.8 L797.6 310 785.8 329.4 779.3 350.9 777.6 372.4 777.2 393.9 781.5 417.5 785 430 794.1 457.3 812.4 480.1 829.4 494.9 813.5 475.5 816.9 452.8 822.3 430.4 827.7 404.6 828.8 376.7 825.5 346.6 818 320.8 811.6 292.9 812 270Z" fill="url(#gWingL)"/>
<g clip-path="url(#cWingL)"><path d="M806 293 L797.6 310 785.8 329.4 779.3 350.9 777.6 372.4" fill="none" stroke="#8a4400" stroke-width="5" opacity="0.7" filter="url(#b2)"/></g>
<!-- gap wing/thigh -->
<path d="M816.9 452.8 L826 477.8 835.1 496 829.4 494.9 813.5 475.5Z" fill="url(#gGap)"/>
<!-- chest -->
<use href="#pChest" fill="url(#gChest)"/>
<g clip-path="url(#cChest)">
 <ellipse cx="872" cy="420" rx="44" ry="42" fill="#ffd600" opacity="0.95" filter="url(#b16)"/>
 <path d="M830 310 L870 335 915 350 950 340 975 310 990 285 1000 340 975 360 930 375 880 370 840 350Z" fill="#ff7a00" opacity="0.55" filter="url(#b10)"/>
 <path d="M945 335 L985 290 1000 350 1002 400 985 380 965 360Z" fill="#1a0800" opacity="0.7" filter="url(#b10)"/>
</g>
<!-- underside feathers -->
<path d="M928.4 490.3 L935.3 508.5 948.9 505.1 960.3 505.1 953.5 490.3 954.6 476.7Z" fill="#ffc000"/>
<!-- thigh -->
<path d="M828.8 417.5 L871.8 428.3 919.3 444.8 928.4 490.3 917.1 505.1 910.2 517.6 885.2 527.9 871.5 547.2 862.4 527.9 846.5 512 835.1 496 826 477.8 816.9 452.8 822.3 430.4Z" fill="url(#gThigh)"/>
<path d="M919.3 444.8 L929.6 475.5 928.4 490.3 923.9 473.2Z" fill="#2a1200"/>
<!-- right dark region + yellow patch -->
<path d="M972.8 430 L1018.4 430 1011.5 455 1004.7 477.8 999 478.9 975.1 496 971.7 489.2 978.5 464.1Z" fill="url(#gChest)"/>
<path d="M972.8 430 L978.5 464.1 971.7 489.2 975.1 496 964.9 510.8 960.3 505.1 953.5 490.3 956.9 471 964.9 448.2Z" fill="#ffd400"/>
<!-- right wing -->
<path d="M984.6 289.7 L988.9 282.1 1002.9 299.3 1012.5 314.4 1015.7 338 1019 366 1016.8 391.8 1021.1 417.5 1016.8 434.7 1014.7 430.4 1007.2 404.6 1000.7 383.2 998.6 350.9 992.1 320.8Z" fill="url(#gWingR)"/>
<path d="M984.6 289.7 L992.1 320.8 998.6 350.9 1000.7 383.2 1007.2 404.6 1014.7 430.4 1011.5 455 1004.7 477.8" fill="none" stroke="#0c0400" stroke-width="3.5"/>
<!-- left foot -->
<path d="M871.5 547.2 L885.2 527.9 910.2 517.6 910.2 537 892 548.4Z" fill="url(#gAnk)"/>
<path d="M871.5 547.2 L892 548.4 896.6 566.6 903.4 598Z" fill="url(#c1)"/>
<path d="M871.5 547.2 L891 548.4 884 564.3Z" fill="#5a2c00"/>
<path d="M893.2 548.4 L909.1 538.1 926.2 588.2 905.7 564.3 896.6 566.6Z" fill="url(#c2)"/>
<path d="M893.2 548.4 L909.1 538.1 912 553 899 560 896.6 566.6Z" fill="url(#c2t)"/>
<path d="M893.2 553 L897.8 567.7 895.5 557.5Z" fill="#0c0400"/>
<path d="M910.2 530.2 L927.3 538.1 949.6 573.4 923.9 552.9 914.8 552.9Z" fill="url(#c3)"/>
<path d="M910.2 530.2 L927.3 538.1 919.3 544Z" fill="#ffaa00"/>
<!-- right foot -->
<path d="M964.9 510.8 L981.9 509.7 985.4 525.6 988.8 554.1 975.1 537 969.4 525.6Z" fill="url(#cA)"/>
<path d="M964.9 510.8 L981.9 509.7 974 521Z" fill="#2a1200"/>
<path d="M974 521 L981.9 509.7 985.4 516.5Z" fill="#e88a00"/>
<path d="M975.1 496 L999 478.9 1002.4 505.1 1013.8 551.8 996.7 525.6 985.4 516.5Z" fill="url(#cB)"/>
<path d="M975.1 496 L999 478.9 1002.4 505.1 997 520 985.4 516.5Z" fill="url(#cBt)"/>
<path d="M1001.3 490.3 L1021.8 498.3 1017.2 502.8 1030.9 537 1011.5 516.5 1004.7 509.7Z" fill="url(#cC)"/>
<path d="M1001.3 490.3 L1021.8 498.3 1010.5 500.5Z" fill="#ffc400"/>
<!-- head -->
<use href="#pHead" fill="url(#gHead)"/>
<g clip-path="url(#cHead)">
 <path d="M842 198 L860.7 188 885 180 913.8 177 936.6 182 959.3 189 977.5 193 982 215 984 240 985 262 984 292" fill="none" stroke="#2a1000" stroke-width="26" filter="url(#b6)" opacity="0.6"/>
 <path d="M838.7 193.2 L860.7 184.1 885 176.6 913.8 174.3 936.6 179.6 959.3 186.4 977.5 190.2 982 215 984 240 985 262 984 292" fill="none" stroke="#000" stroke-width="10" filter="url(#b3)" opacity="0.9"/>
 <path d="M958 200 L1000 195 1000 300 972 318 956 302 958 250Z" fill="#1a0800" opacity="0.7" filter="url(#b10)"/>
 <path d="M915 176 L978 188 983 218 958 220 925 204 895 196Z" fill="#1a0800" opacity="0.6" filter="url(#b6)"/>
 <path d="M812 268 L828.8 304.8 860.7 325.6 897.1 333.9 929 330.1 951.7 318 972 298" fill="none" stroke="#ffcf00" stroke-width="7" opacity="0.5" filter="url(#b2)"/>
 <path d="M811.4 262.9 L828.8 300.8 860.7 320.6 897.1 328.9 929 325.1 951.7 313 970 293" fill="none" stroke="#e88600" stroke-width="2.5" opacity="0.5" filter="url(#b2)"/>
</g>
<g clip-path="url(#cHood)">
 <rect x="830" y="150" width="180" height="150" fill="url(#gHoodRim)"/>
 <path d="M838.7 194.2 L860.7 185.1 885 177.6 913.8 175.3 936.6 180.6 959.3 187.4 976.5 191.2 980 215 982 240 983 262 982 292" fill="none" stroke="#000" stroke-width="13" filter="url(#b3)" transform="translate(0,-1.5)"/>
</g>
<path d="M838.7 193.2 L860.7 184.1 885 176.6 913.8 174.3 936.6 179.6 959.3 186.4 977.5 190.2 981 215 983 240 984 270" fill="none" stroke="#000" stroke-width="2.5" stroke-linejoin="round"/>
<!-- eyes -->
<path d="M873.6 255 L878.9 242.1 892.6 236.8 904.7 239.9 911.5 252.8 907.7 264.1 888 270.7 875.9 262.6Z" fill="url(#gEyeL)"/>
<path d="M953.3 233 L958 222 968 217.5 976 221 979.8 233 977 244 968 249.4 958 245Z" fill="url(#gEyeR)"/>
<path d="M962 219 L968 216.5 976.5 220 981 233 978.5 245 975 240 976.5 232 973.5 224 967 220.5Z" fill="#0c0400"/>
<!-- beak -->
<path d="M938.1 244.4 L932 256.6 953.3 301.3 954.8 275.5 949.5 250.5Z" fill="url(#gBeak)"/>
<path d="M938.1 244.4 L949.5 250.5 954.8 275.5 953.3 301.3 951.5 276 944 253Z" fill="#140800"/>
</svg>

  <span class="m y" id="t_fps" style="left:71px;top:3px">FPS:<span style="letter-spacing:-1.7px"> </span>60,04</span>
  <span class="m y" id="t_pol" style="left:36px;top:27px">Polygons:<span style="letter-spacing:-1.7px"> </span>1.051</span>
  <span class="m y" id="t_ver" style="left:36px;top:41px">Vertices:<span style="letter-spacing:-1.7px"> </span>1.017</span>
  <span class="m" id="t_more" style="left:9px;top:60px">[ More information ]</span>
  <span class="m" style="left:441.5px;top:2px;color:#c9b11e">Geometry</span>
  <span class="m y" style="left:503.8px;top:1.5px">|</span>
  <span class="m dim" style="left:514px;top:2px">Bounds</span>
  <span class="m y" style="left:560px;top:1.5px">|</span>
  <span class="m dim" style="left:572px;top:2px">Skeleton</span>
  <span class="m r" id="t_help" style="right:9px;top:2px">Click here for help</span>
  <span class="m r lab y" style="top:27px">Camera mode:</span><span class="m val" style="top:27px">Around</span>
  <span class="m r lab y" style="top:41px">Show grid:</span><span class="m val" style="top:41px">True</span>
  <span class="m r lab y" style="top:69px">Geometry:</span><span class="m val" style="top:69px">True</span>
  <span class="m r lab y" style="top:83px">Edged Faces:</span><span class="m val" style="top:83px">False</span>
  <span class="m r lab y" style="top:97px">Display Points:</span><span class="m val" style="top:97px">False</span>
  <span class="m r lab y" style="top:111px">Level of Detail:</span><span class="m val" style="top:111px">High</span>
  <span class="m r y" style="right:9px;top:625px">Using textures:</span>
  <span class="m r" style="right:9px;top:643px">[+] Add texture</span>
  <span class="m r y" style="right:9px;top:661px">teef_024_u.ydd</span>
  <span class="m r" style="right:9px;top:679px">[ View embedded textures ]</span>
  <span class="m r" style="right:9px;top:697px">[ Export embedded textures ]</span>
  <span class="ax" style="left:41px;top:635px;color:#1c2fd6">z</span>
  <span class="ax" style="left:70px;top:664px;color:#c01c1c">x</span>
  <span class="ax" style="left:30px;top:660px;color:#22b022">y</span>
 </div>
</div>
<div id="wm">ragemp.pro</div>
</body></html>
